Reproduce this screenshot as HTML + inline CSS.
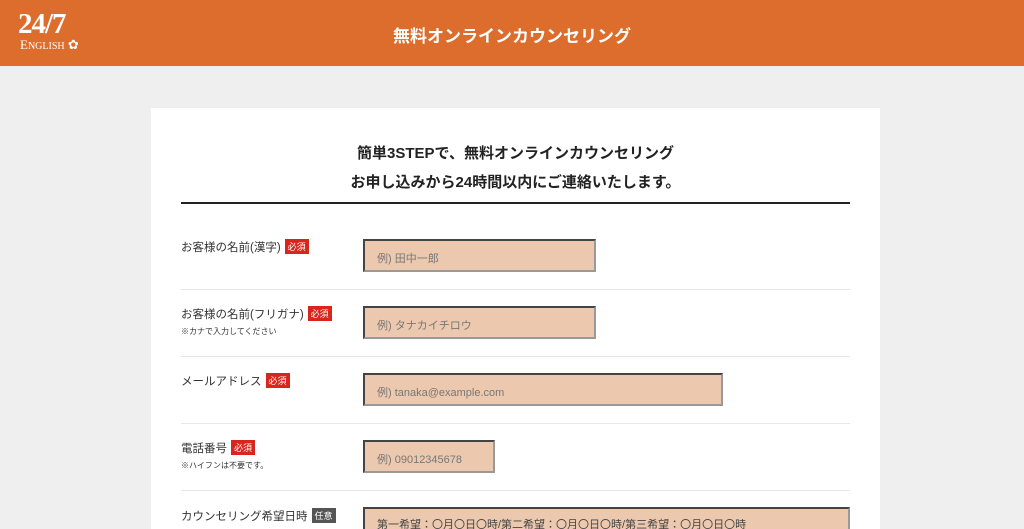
<!DOCTYPE html>
<html><head><meta charset="utf-8"><style>
*{margin:0;padding:0;box-sizing:border-box}
html,body{width:1024px;height:529px;overflow:hidden}
body{background:#efefef;font-family:"Liberation Sans","Noto Sans CJK JP",sans-serif;position:relative}
.hd{position:absolute;left:0;top:0;width:1024px;height:66px;background:#dc6d2c}
.hd .t{position:absolute;left:0;width:1024px;top:22px;text-align:center;color:#fff;font-size:17px;font-weight:bold}
.logo{position:absolute;left:18px;top:12px;color:#fff;font-family:"Liberation Serif",serif}
.logo .n{font-size:29px;font-weight:bold;line-height:24px;letter-spacing:-1px}
.logo .e{font-size:13px;line-height:14px;margin-left:2px;margin-top:2px}
.card{position:absolute;left:151px;top:108px;width:729px;height:421px;background:#fff;overflow:hidden}
.h1{position:absolute;left:0;width:729px;text-align:center;font-size:15px;font-weight:bold;color:#222}
.rule{position:absolute;left:30px;top:94px;width:669px;height:2px;background:#222}
.lab{position:absolute;left:30px;font-size:11.5px;color:#333}
.lab small{display:block;font-size:8px;margin-top:4px;color:#333}
.b{display:inline-block;background:#d9261c;color:#fff;font-size:9px;padding:1px 3px;margin-left:4px;vertical-align:1px}
.b.g{background:#555}
.in{position:absolute;left:212px;height:33px;background:#ecc9ae;border:2px solid #444;border-right-color:#999;border-bottom-color:#999;font-size:11px;color:#777;padding:9px 0 0 12px}
.sep{position:absolute;left:30px;width:669px;height:1px;background:#e6e6e6}
</style></head><body>
<div class="hd"><div class="logo"><div class="n">24/7</div><div class="e">E<span style="font-size:10px">NGLISH</span> ✿</div></div><div class="t">無料オンラインカウンセリング</div></div>
<div class="card">
<div class="h1" style="top:34px">簡単3STEPで、無料オンラインカウンセリング</div>
<div class="h1" style="top:63px">お申し込みから24時間以内にご連絡いたします。</div>
<div class="rule"></div>
<div class="lab" style="top:131px">お客様の名前(漢字)<span class="b">必須</span></div>
<div class="in" style="top:131px;width:233px">例) 田中一郎</div>
<div class="sep" style="top:181px"></div>
<div class="lab" style="top:198px">お客様の名前(フリガナ)<span class="b">必須</span><small>※カナで入力してください</small></div>
<div class="in" style="top:198px;width:233px">例) タナカイチロウ</div>
<div class="sep" style="top:248px"></div>
<div class="lab" style="top:265px">メールアドレス<span class="b">必須</span></div>
<div class="in" style="top:265px;width:360px">例) tanaka@example.com</div>
<div class="sep" style="top:315px"></div>
<div class="lab" style="top:332px">電話番号<span class="b">必須</span><small>※ハイフンは不要です。</small></div>
<div class="in" style="top:332px;width:132px">例) 09012345678</div>
<div class="sep" style="top:382px"></div>
<div class="lab" style="top:400px">カウンセリング希望日時<span class="b g">任意</span></div>
<div class="in" style="top:399px;width:487px;height:40px;color:#444;padding-top:7px">第一希望：〇月〇日〇時/第二希望：〇月〇日〇時/第三希望：〇月〇日〇時</div>
</div>
</body></html>
